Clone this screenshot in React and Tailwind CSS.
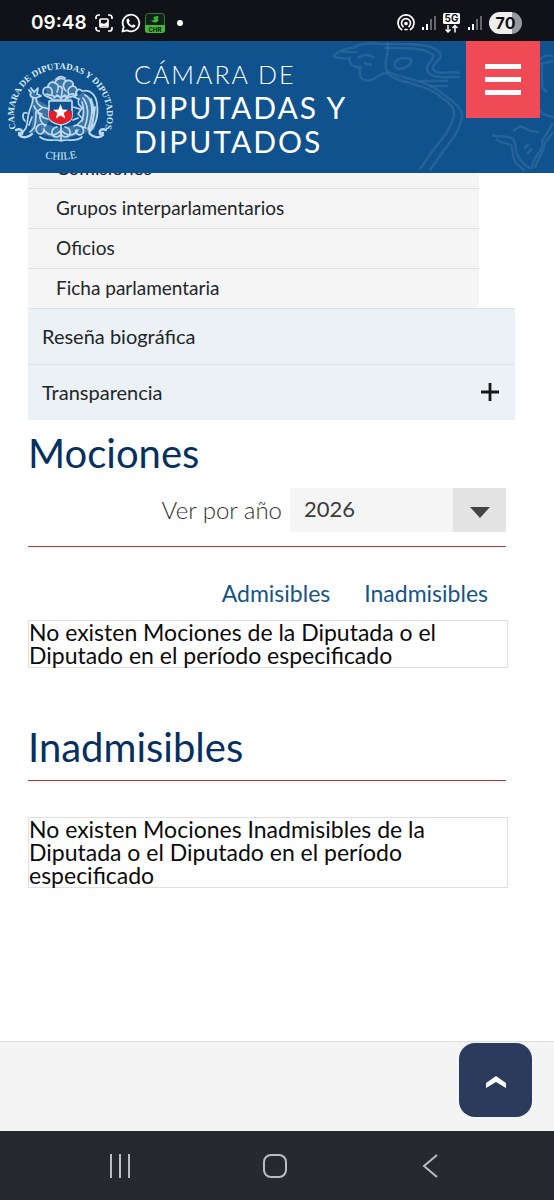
import React from "react";

const subItems = ["Comisiones", "Grupos interparlamentarios", "Oficios", "Ficha parlamentaria"];

function Signal() {
  return (
    <svg viewBox="0 0 16 16" className="h-4 w-4" aria-hidden="true">
      <rect x="1" y="12" width="2" height="3" fill="#fff" />
      <rect x="5" y="9" width="2" height="6" fill="#fff" />
      <rect x="9" y="4" width="2" height="11" fill="#66676d" />
      <rect x="13" y="1" width="2" height="14" fill="#66676d" />
    </svg>
  );
}

function StatusBar() {
  return (
    <div className="flex h-[41px] shrink-0 items-center justify-between bg-[#111218] pr-8 pl-[31px] pt-1 text-white">
      <div className="flex items-center gap-1">
        <span className="mr-1 font-['Inter',sans-serif] text-[19px] leading-6 font-semibold">09:48</span>
        <svg viewBox="0 0 18 18" className="h-[18px] w-[18px]" fill="none" stroke="#fff" strokeWidth="1.7" aria-hidden="true">
          <path d="M1 5V3.500A2.500 2.500 0 0 1 3.500 1H5M13 1h1.500A2.500 2.500 0 0 1 17 3.500V5M17 13v1.500A2.500 2.500 0 0 1 14.500 17H13M5 17H3.500A2.500 2.500 0 0 1 1 14.500V13" />
          <rect x="5" y="5" width="8" height="8" rx="1" />
          <path d="M5 12v-2l2-1 2 1 3-2 1 1v3z" fill="#fff" stroke="none" />
        </svg>
        <svg viewBox="0 0 20 20" className="ml-1 h-5 w-5" aria-hidden="true">
          <path d="M1.500 18.500l1.200-4.500A8.300 8.300 0 1 1 6 17.300z" fill="none" stroke="#fff" strokeWidth="1.800" strokeLinejoin="round" />
          <path d="M7 5.500c-.8.1-1.500 1-1.500 2.200 0 3.200 3.600 6.900 6.700 6.900 1.400 0 2.300-.9 2.300-2.100l-2.300-1.300-1.100 1.200c-1.500-.5-2.800-1.800-3.300-3.200l1-1.100-1-2.400z" fill="#fff" />
        </svg>
        <svg viewBox="0 0 20 20" className="h-5 w-5" aria-hidden="true">
          <rect x=".5" y=".5" width="19" height="19" rx="3" fill="#10231a" stroke="#347c37" />
          <path d="M0 12h20v5a3 3 0 0 1-3 3H3a3 3 0 0 1-3-3z" fill="#43b839" />
          <path d="M6 7c2 1 3 0 4-1-2 0-2-1-1-2l3-1c2 0 2 2 0 3 2 0 2 2 0 3-2 1-5 0-6-2z" fill="#43b839" />
          <text x="10" y="18.500" textAnchor="middle" fill="#111218" fontSize="6" fontWeight="700" fontFamily="Inter, sans-serif">CHR</text>
        </svg>
        <span className="ml-2 h-[6px] w-[6px] rounded-full bg-white" />
      </div>
      <div className="flex items-center gap-[6px]">
        <svg viewBox="0 0 18 18" className="h-[18px] w-[18px]" fill="none" stroke="#fff" strokeWidth="1.700" strokeLinecap="round" aria-hidden="true">
          <path d="M4.500 15.500A8 8 0 1 1 13.500 15.500M6 12.500a4.500 4.500 0 1 1 6 0" />
          <circle cx="9" cy="9.500" r="1" fill="#fff" />
          <path d="M8 15.500h2" />
        </svg>
        <Signal />
        <svg viewBox="0 0 18 20" className="h-5 w-[18px]" aria-hidden="true">
          <rect x="0" y="0" width="17" height="11" rx="1.500" fill="#fff" />
          <text x="8.500" y="9" textAnchor="middle" fill="#111218" fontSize="10" fontWeight="700" fontFamily="Inter, sans-serif">5G</text>
          <path d="M5 12v7M2.500 16.500L5 19l2.500-2.500M12 19.500v-7M9.500 15L12 12.500l2.500 2.500" fill="none" stroke="#fff" strokeWidth="1.500" />
        </svg>
        <Signal />
        <span className="flex h-[22px] w-[33px] items-center justify-center rounded-full bg-linear-to-r from-[#eeeeef] from-70% to-[#98999d] to-70% font-['Inter',sans-serif] text-[16px] leading-5 font-bold text-[#111218]">70</span>
      </div>
    </div>
  );
}

function Crest() {
  return (
    <svg viewBox="0 0 130 132" className="h-[132px] w-[130px] shrink-0" role="img" aria-label="Escudo de la Cámara de Diputadas y Diputados de Chile">
      <defs>
        <path id="crest-top" d="M17 91A46.500 46.500 0 1 1 104 91" />
        <path id="crest-bottom" d="M34 114Q60 124 88 113" />
      </defs>
      <g fill="#dcecf7" fontFamily="'Liberation Serif', serif" fontWeight="700">
        <text fontSize="9"><textPath href="#crest-top" startOffset="50%" textAnchor="middle">CAMARA DE DIPUTADAS Y DIPUTADOS</textPath></text>
        <text fontSize="11" fontWeight="400"><textPath href="#crest-bottom" startOffset="50%" textAnchor="middle">CHILE</textPath></text>
      </g>
      <g fill="#8fb6d6" fillOpacity=".35">
        <path d="M45 47l7-8 8-4 9 4 7 8-3 10-12 4-12-4z" />
        <path d="M83 51l9 6 6 14-3 17-12 5-3-11 3-13-5-14z" />
        <path d="M30 48l6 3 2 8 10 6 1 15-6 10-12 2 2-19z" />
        <path d="M44 83l17 4 18-4 3 9-21 8-21-8z" />
      </g>
      <g fill="none" stroke="#bdd9ee" strokeWidth="1.700" strokeLinecap="round" strokeLinejoin="round">
        <path d="M52 58c-4-3-9-2-9-7 0-4 3-5 5-5 0-4 4-6 7-4 1-5 8-6 11-2 4-2 8 1 7 5 5 1 5 8 0 10-3 2-7 0-8 4" />
        <path d="M48 46c3 0 5 3 4 7M55 42c4 1 4 5 2 9M66 40c-4 3-3 7 0 10M73 45c-5 1-6 5-4 9M56 38c3-3 6-3 9-1M46 53c3 2 6 0 9 3M74 53c-4-1-6 1-8 4M58 46c3-2 5 1 4 5l-1 7" />
        <path d="M51 59h20M54 57l3-3 4 3 4-3 3 3" />
        <path d="M31 47l3 4 4-4-1 6 4 2-5 2c0 5 2 7 6 9l7 2M36 57c-4 0-7-2-5-5l-2-3M33 57c0 7-3 9-4 15-2 5-1 10-3 15l-3 4M42 67l-6 4c0 6 0 11-2 16l-4 4M38 72l6 5 4 1M34 65c2 5 5 7 8 8M27 72c-5-2-5 5-2 8M40 73c-1 6 2 9 5 12M29 84l3-8" />
        <path d="M82 50c-4-4-8 1-5 4l-3 2 5 2c-2 4 0 6 3 9l-4 6 5 5-6 6 9 3M83 50c7-2 13 4 14 13 2 12-1 21-8 29M85 54c8 4 9 18 3 34M83 57c5 7 6 17 2 28M82 61c2 6 2 13 0 19M91 58c4 10 3 22-2 32M95 66l-3 20M80 68l-7-2M78 77l-5 2" />
        <path d="M49 60h23v15c0 6-6 8-11 9-6-1-12-3-12-9z" fill="#0f528d" />
        <path d="M46 84c-6-3-12 2-9 7 3 4 8 1 7-3M44 89c6 7 12 6 17 0 5 6 12 7 17 0M76 89c-1 4 4 7 7 3 2-5-4-10-9-7M57 86c-6 1-7 9-1 10 4 0 6-3 5-7M65 86c6 1 7 9 1 10-4 0-6-3-5-7M61 84v16M40 96c8 6 14 1 21 4 7-3 14 2 21-4" />
        <path d="M16 89c4-2 7 0 6 4l-3-1M19 94c4 4 10 2 13-1M106 89c-4-2-7 0-6 4l3-1M103 94c-4 4-10 2-13-1" strokeWidth="2.400" />
      </g>
      <path d="M49 70h23v5c0 5-6 7-11 8-6-1-12-3-12-8z" fill="#e81d23" />
      <path d="M60.500 63l2 5.500 5.500.2-4.300 3.400 1.600 5.400-4.800-3.100-4.700 3.100 1.500-5.400-4.300-3.400 5.500-.2z" fill="#fff" />
    </svg>
  );
}

function Header() {
  return (
    <header className="relative z-10 flex h-[132px] shrink-0 items-start overflow-hidden bg-[#0f528d]">
      <svg viewBox="0 0 240 132" className="absolute top-0 right-0 h-[132px] w-[240px]" fill="none" stroke="#4a80ae" strokeOpacity=".36" strokeWidth="2.500" strokeLinejoin="round" aria-hidden="true">
        <path d="M66 3c-10-2-22 0-27 4-8 0-15 4-20 8 5 3 11 3 17 2-2 6 4 10 11 9-3 6-1 11 3 13 10 3 14-7 23-7 9 8 17 8 26 11 13 4 22 7 29 14 8 5 13 10 12 18-3 13-12 23-20 33l-14 20" />
        <path d="M73 2c4 10-5 18 0 28 8 5 17 6 27 9 13 3 24 9 33 17 8 6 16 12 15 20-2 13-10 23-18 33l-14 20" />
        <path d="M66 3h20c17 1 33 0 40 9 3 8-7 8-7 15 2 9 16 2 27 5M70 7h17c14 0 26 1 32 7 1 6-7 7-6 15 3 9 17 7 33 7M82 27c-5-8 6-12 15-9 2 5-7 12-15 9zM28 11h15M44 17c5-4 12-4 16 0M50 22l8 2M106 40h28M116 45h18" />
        <path d="M239 15c-8-2-14 2-15 8 7 0 9-2 15-3M228 22v24l5 5M219 58c3 11 10 17 21 18M178 94c8 3 15 0 21 4 4 4 1 14 7 20 3 4 6 9 12 9 0-12 12-15 10-27l11-18M182 98c6 5 11 4 15 6 3 6 0 13 6 19l8 7M199 90l7-5 11 5 8 1M221 127c2-10 9-13 9-24l9-12M210 107l5-4M213 113l5-5" />
      </svg>
      <Crest />
      <div className="relative pt-[17px] pl-1 tracking-[2px] text-white">
        <p className="text-[25px] leading-8 font-light">CÁMARA DE</p>
        <p className="text-[30px] leading-[34px]">DIPUTADAS Y<br />DIPUTADOS</p>
      </div>
      <button type="button" aria-label="Abrir menú" className="relative mr-[14px] ml-auto flex h-[77px] w-[74px] flex-col items-center justify-center gap-2 bg-[#ef4a56]">
        <span className="h-[5px] w-9 bg-white" />
        <span className="h-[5px] w-9 bg-white" />
        <span className="h-[5px] w-9 bg-white" />
      </button>
    </header>
  );
}

export default function App() {
  return (
    <div className="flex min-h-screen flex-col bg-white font-['Lato',sans-serif] text-[#222629]">
      <StatusBar />
      <Header />
      <main className="flex-1 pr-12 pl-7">
        <nav className="-mt-6 -mr-[9px] text-[20px] leading-6" aria-label="Ficha">
          <ul className="mr-9 bg-[#f5f5f5] text-[19px]">
            {subItems.map((t) => (
              <li key={t} className="border-b border-[#dfe1e3]">
                <a href="#" className="flex h-[39px] items-center pb-[2px] pl-7">{t}</a>
              </li>
            ))}
          </ul>
          <div className="-mt-px border-t border-[#dfe1e3] bg-[#ecf1f5]">
            <a href="#" className="flex h-[55px] items-center px-[14px] pb-[2px]">Reseña biográfica</a>
            <button type="button" className="flex h-14 w-full items-center justify-between border-t border-[#dfe1e3] pr-4 pb-[2px] pl-[14px]">
              Transparencia
              <svg viewBox="0 0 18 18" className="h-[18px] w-[18px]" stroke="#17191b" strokeWidth="2.800" aria-hidden="true">
                <path d="M9 0v18M0 9h18" />
              </svg>
            </button>
          </div>
        </nav>

        <section>
          <h1 className="pt-2 text-[40px] leading-[50px] text-[#06305f]">Mociones</h1>
          <div className="mt-[10px] flex items-center justify-end gap-2 border-b border-[#c5333c] pb-[14px]">
            <label htmlFor="year" className="text-[24px] leading-8 font-light text-[#333]">Ver por año</label>
            <div className="relative h-11 w-[216px]">
              <select id="year" defaultValue="2026" className="h-full w-full appearance-none bg-[#f5f5f5] pr-14 pb-[2px] pl-[14px] text-[22px] leading-7 text-[#3c3c3c]">
                <option>2026</option>
              </select>
              <span className="pointer-events-none absolute inset-y-0 right-0 flex w-[53px] items-center justify-center bg-[#e3e3e3] pt-1">
                <svg viewBox="0 0 20 11" className="h-[11px] w-5" aria-hidden="true"><path d="M0 0h20L10 11z" fill="#444" /></svg>
              </span>
            </div>
          </div>
          <div className="mt-[30px] flex justify-end gap-[34px] pr-[18px] text-[23px] leading-8 text-[#175486]">
            <a href="#admisibles">Admisibles</a>
            <a href="#inadmisibles">Inadmisibles</a>
          </div>
          <p id="admisibles" className="mt-[11px] -mr-[2px] border border-[#e0e0e0] text-[23px] leading-[23px] text-[#0b0b0b]">
            No existen Mociones de la Diputada o el Diputado en el período especificado
          </p>
        </section>

        <section id="inadmisibles">
          <h2 className="mt-[54px] border-b border-[#c5333c] pb-2 text-[40px] leading-[50px] text-[#06305f]">Inadmisibles</h2>
          <p className="mt-9 -mr-[2px] border border-[#e0e0e0] text-[23px] leading-[23px] text-[#0b0b0b]">
            No existen Mociones Inadmisibles de la Diputada o el Diputado en el período especificado
          </p>
        </section>
      </main>

      <footer className="flex h-[90px] shrink-0 justify-end border-t border-[#dddddd] bg-[#f4f4f4] pt-px pr-[22px]">
        <button type="button" aria-label="Volver arriba" className="flex h-[74px] w-[73px] items-center justify-center rounded-2xl bg-[#2a3b5d] pt-1">
          <svg viewBox="0 0 20 12" className="h-3 w-5" aria-hidden="true"><path d="M0 7L10 0l10 7v5L10 6 0 12z" fill="#fff" /></svg>
        </button>
      </footer>
      <div className="flex h-[69px] shrink-0 items-center justify-around bg-[#28292e] pr-[47px] pl-[42px]">
        <button type="button" aria-label="Recientes">
          <svg viewBox="0 0 24 24" className="h-6 w-6" stroke="#bcbdc0" strokeWidth="2" aria-hidden="true"><path d="M3 0v24M12 0v24M21 0v24" /></svg>
        </button>
        <button type="button" aria-label="Inicio">
          <svg viewBox="0 0 24 24" className="h-6 w-6" fill="none" stroke="#bcbdc0" strokeWidth="2" aria-hidden="true"><rect x="1" y="1" width="22" height="22" rx="7" /></svg>
        </button>
        <button type="button" aria-label="Atrás">
          <svg viewBox="0 0 24 24" className="h-6 w-6" fill="none" stroke="#bcbdc0" strokeWidth="2" aria-hidden="true"><path d="M19 1L6 12l13 11" /></svg>
        </button>
      </div>
    </div>
  );
}
